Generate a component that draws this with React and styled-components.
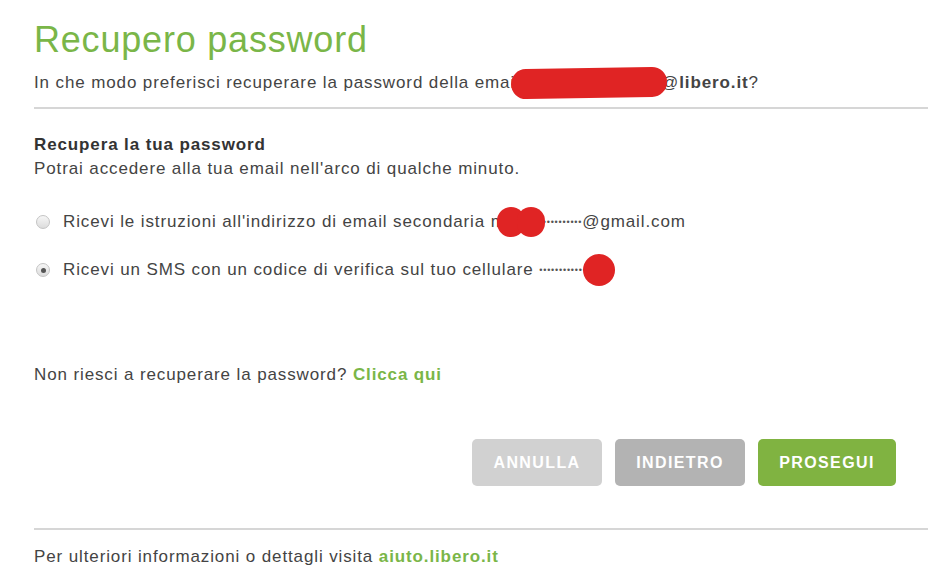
import React from 'react';
import styled, { createGlobalStyle } from 'styled-components';

const Global = createGlobalStyle`
  html, body {
    margin: 0;
    background: #fff;
  }
  body {
    font-family: "Liberation Sans", Arial, sans-serif;
    color: #444;
  }
`;

const Page = styled.div`
  width: 928px;
  height: 584px;
  padding: 20px 0 0 34px;
  box-sizing: border-box;
  overflow: hidden;
  font-size: 17px;
  letter-spacing: 0.88px;
`;

const Title = styled.h1`
  margin: 0;
  font-size: 36px;
  line-height: 40px;
  font-weight: normal;
  letter-spacing: 0.8px;
  color: #7ab648;
`;

const Lead = styled.p`
  margin: 14px 0 0;
  height: 18px;
  line-height: 18px;
  color: #444;
  display: flex;
  align-items: center;
  white-space: nowrap;
`;

const Divider = styled.hr`
  margin: ${p => p.$top || 0}px 0 0;
  border: 0;
  height: 2px;
  background: #d6d6d6;
`;

const Section = styled.div`
  margin-top: 24px;
  line-height: 24px;
`;

const SectionTitle = styled.div`
  font-weight: bold;
  color: #333;
`;

const Options = styled.div`
  margin-top: 25px;
  display: flex;
  flex-direction: column;
  gap: 16px;
`;

const Option = styled.label`
  display: flex;
  align-items: center;
  height: 32px;
  color: #444;
  white-space: nowrap;
`;

const Radio = styled.span`
  width: 12px;
  height: 12px;
  margin: 0 13px 0 2px;
  border-radius: 50%;
  border: 1px solid #c4c4c4;
  background: linear-gradient(#f6f6f6, #dcdcdc);
  display: flex;
  align-items: center;
  justify-content: center;
  flex: none;

  &::after {
    content: '';
    width: 5px;
    height: 5px;
    border-radius: 50%;
    background: ${p => (p.$checked ? '#555' : 'transparent')};
  }
`;

const Blot = styled.span`
  display: inline-block;
  flex: none;
  width: ${p => p.$w}px;
  height: ${p => p.$h}px;
  border-radius: ${p => p.$h / 2}px;
  background: #e02424;
  margin: 0 ${p => p.$mr || 0}px 0 ${p => p.$ml || 0}px;
  transform: rotate(${p => p.$rot || 0}deg);
  position: relative;
  z-index: 1;
`;

const Dots = styled.span`
  font-size: 9px;
  letter-spacing: 0.8px;
  color: #555;
`;

const Help = styled.p`
  margin: 80px 0 0;
  line-height: 18px;
`;

const Link = styled.a`
  color: #7ab648;
  font-weight: ${p => (p.$bold ? 'bold' : 'normal')};
  text-decoration: none;
`;

const Actions = styled.div`
  margin-top: 55px;
  padding-right: 32px;
  display: flex;
  justify-content: flex-end;
  gap: 13px;
`;

const Button = styled.button`
  height: 47px;
  width: ${p => p.$w}px;
  padding: 0;
  border: 0;
  border-radius: 5px;
  background: ${p => p.$bg};
  color: #fff;
  font-family: "Liberation Sans", Arial, sans-serif;
  font-size: 16px;
  font-weight: bold;
  letter-spacing: 1.4px;
  cursor: pointer;
`;

const Footer = styled.p`
  margin: 18px 0 0;
  line-height: 18px;
`;

export default function App() {
  return (
    <Page>
      <Global />
      <Title>Recupero password</Title>
      <Lead>
        In che modo preferisci recuperare la password della emai
        <Blot $w={156} $h={30} $ml={-4} $mr={-6} $rot={-1} />
        @<b>libero.it</b>?
      </Lead>
      <Divider $top={15} />

      <Section>
        <SectionTitle>Recupera la tua password</SectionTitle>
        <div>Potrai accedere alla tua email nell'arco di qualche minuto.</div>
      </Section>

      <Options>
        <Option>
          <Radio />
          Ricevi le istruzioni all'indirizzo di email secondaria m
          <Blot $w={28} $h={30} $ml={-9} />
          <Blot $w={28} $h={30} $ml={-8} $mr={-2} />
          <Dots>••••••••••</Dots>@gmail.com
        </Option>
        <Option>
          <Radio $checked />
          Ricevi un SMS con un codice di verifica sul tuo cellulare&nbsp;
          <Dots>••••••••••••</Dots>
          <Blot $w={32} $h={32} $ml={-4} $mr={-10} />
          <span style={{ color: '#ccc' }}>3</span>
        </Option>
      </Options>

      <Help>
        Non riesci a recuperare la password? <Link $bold href="#">Clicca qui</Link>
      </Help>

      <Actions>
        <Button $bg="#d1d1d1" $w={130}>ANNULLA</Button>
        <Button $bg="#b3b3b3" $w={130}>INDIETRO</Button>
        <Button $bg="#80b341" $w={138}>PROSEGUI</Button>
      </Actions>

      <Divider $top={42} />
      <Footer>
        Per ulteriori informazioni o dettagli visita <Link $bold href="#">aiuto.libero.it</Link>
      </Footer>
    </Page>
  );
}
